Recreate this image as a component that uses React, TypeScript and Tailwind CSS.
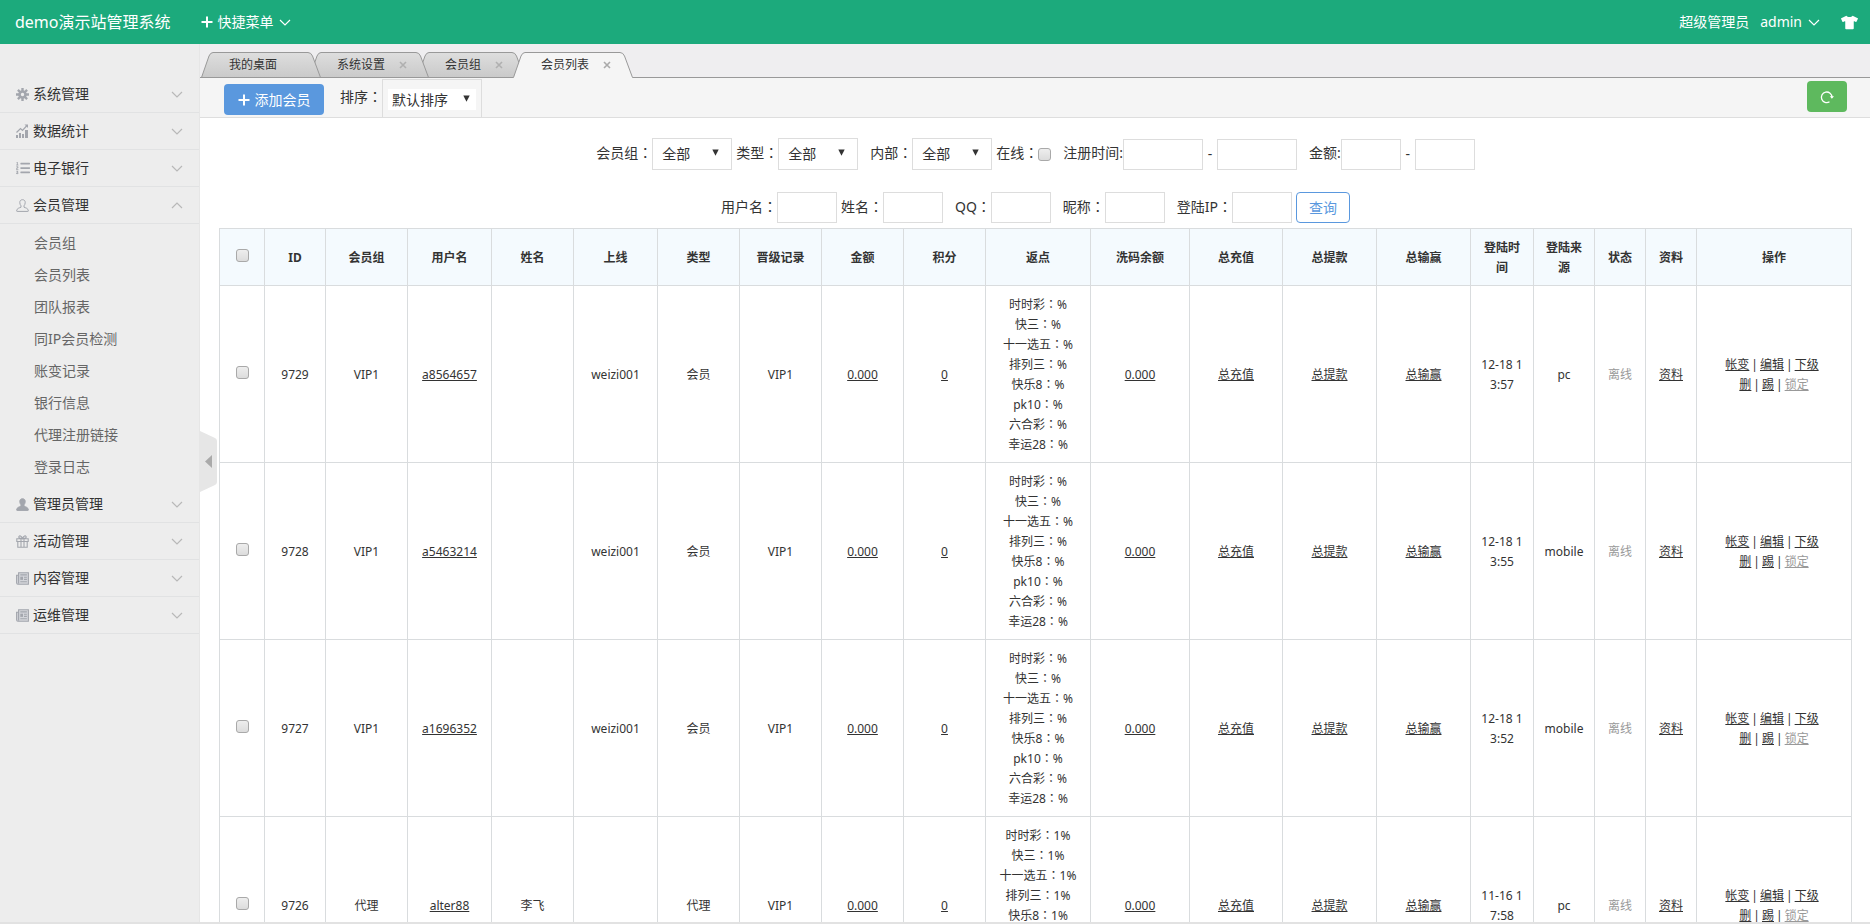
import type { ReactNode } from 'react';

import { FaListOl, FaTshirt } from 'react-icons/fa';

interface MenuItem {
    title: string,
    icon: ReactNode,
    children?: string[]
};

interface TabItem {
    title: string,
    width: number,
    className: string,
    active?: boolean,
    closable?: boolean
};

interface Member {
    id: number,
    group: string,
    username: string,
    realname: string,
    parent: string,
    type: string,
    time: string,
    source: string,
    rebate: string
};

const GearIcon = () => (
    <svg width="13" height="13" viewBox="0 0 13 13" fill="none" stroke="currentColor">
        <circle cx="6.5" cy="6.5" r="3" strokeWidth="2.6" />
        <path d="M6.5 0V3M6.5 10V13M0 6.5H3M10 6.5H13M1.9 1.9L4 4M9 9L11.1 11.1M1.9 11.1L4 9M9 4L11.1 1.9" strokeWidth="2.4" />
    </svg>
);

const ChartIcon = () => (
    <svg width="13" height="14" viewBox="0 0 13 14" fill="currentColor">
        <path d="M0 11h2v3H0zM3 9h2v5H3zM6 10h2v4H6zM9 6h3v8H9z" />
        <path d="M0.5 8.5L4.5 4.5L6.5 6.5L11 1.5" fill="none" stroke="currentColor" strokeWidth="1.2" />
        <path d="M8.5 0.5H12V4z" />
    </svg>
);

const UserIcon = ({ filled = false }: { filled?: boolean }) => (
    <svg width="13" height="13" viewBox="0 0 13 13" fill={filled ? 'currentColor' : 'none'} stroke="currentColor">
        <path d="M6.5 0.7C4.6 0.7 3.7 2 3.8 3.7C3.9 5 4.3 6 5 6.8V8.2C3.5 8.9 0.8 9.2 0.6 11.9C0.6 12.2 0.8 12.4 1.1 12.4H11.9C12.2 12.4 12.4 12.2 12.4 11.9C12.2 9.2 9.5 8.9 8 8.2V6.8C8.7 6 9.1 5 9.2 3.7C9.3 2 8.4 0.7 6.5 0.7Z" />
    </svg>
);

const GiftIcon = () => (
    <svg width="13" height="13" viewBox="0 0 13 13" fill="none" stroke="currentColor" strokeWidth="1.1">
        <path d="M0.8 3.7H12.2V6.5H0.8zM1.8 6.5V12.3H11.2V6.5M5 3.7V12.3M8 3.7V12.3M6.5 3.5C5.5 1 3.2 0 2.8 1.8C2.6 2.8 3.5 3.5 6.5 3.6C9.5 3.5 10.4 2.8 10.2 1.8C9.8 0 7.5 1 6.5 3.5Z" />
    </svg>
);

const NewsIcon = () => (
    <svg width="13" height="13" viewBox="0 0 13 13" fill="none" stroke="currentColor" strokeWidth="1.1">
        <path d="M2.6 0.7H12.4V12.3H2C1.1 12.3 0.6 11.7 0.6 10.8V3.2H2.6V0.7ZM2.6 3V11.5" fill="#d3d5da" />
        <path d="M4.3 2.9H10.9M8 5.2H10.9M8 7.4H10.9M4.3 9.8H10.9" />
        <path d="M4.3 4.7H7V7.9H4.3z" fill="currentColor" stroke="none" />
    </svg>
);

const Chevron = ({ up = false }: { up?: boolean }) => (
    <svg width="12" height="7" viewBox="0 0 12 7" fill="none" stroke="currentColor" strokeWidth="1.2">
        <path d={up ? 'M1 6L6 1L11 6' : 'M1 1L6 6L11 1'} />
    </svg>
);

const PlusIcon = () => (
    <svg width="12" height="12" viewBox="0 0 12 12" fill="none" stroke="currentColor" strokeWidth="2">
        <path d="M6 0.5V11.5M0.5 6H11.5" />
    </svg>
);

// full-width colon, centred in its box
const Colon = () => <span className="font-['Noto_Sans_CJK_TC',sans-serif] leading-none">：</span>;

const menu: MenuItem[] = [
    { title: '系统管理', icon: <GearIcon /> },
    { title: '数据统计', icon: <ChartIcon /> },
    { title: '电子银行', icon: <FaListOl className="size-[14px]" /> },
    {
        title: '会员管理',
        icon: <UserIcon />,
        children: ['会员组', '会员列表', '团队报表', '同IP会员检测', '账变记录', '银行信息', '代理注册链接', '登录日志']
    },
    { title: '管理员管理', icon: <UserIcon filled /> },
    { title: '活动管理', icon: <GiftIcon /> },
    { title: '内容管理', icon: <NewsIcon /> },
    { title: '运维管理', icon: <NewsIcon /> }
];

const tabs: TabItem[] = [
    { title: '我的桌面', width: 120, className: 'w-[120px] z-30' },
    { title: '系统设置', width: 120, className: 'w-[120px] z-20', closable: true },
    { title: '会员组', width: 108, className: 'w-[108px] z-10', closable: true },
    { title: '会员列表', width: 120, className: 'w-[120px] z-40', closable: true, active: true }
];

const columns = [
    { title: 'ID', width: 'w-[61px]' },
    { title: '会员组', width: 'w-[82px]' },
    { title: '用户名', width: 'w-[84px]' },
    { title: '姓名', width: 'w-[82px]' },
    { title: '上线', width: 'w-[84px]' },
    { title: '类型', width: 'w-[82px]' },
    { title: '晋级记录', width: 'w-[82px]' },
    { title: '金额', width: 'w-[82px]' },
    { title: '积分', width: 'w-[82px]' },
    { title: '返点', width: 'w-[105px]' },
    { title: '洗码余额', width: 'w-[99px]' },
    { title: '总充值', width: 'w-[93px]' },
    { title: '总提款', width: 'w-[94px]' },
    { title: '总输赢', width: 'w-[94px]' },
    { title: '登陆时间', width: 'w-[63px]' },
    { title: '登陆来源', width: 'w-[61px]' },
    { title: '状态', width: 'w-[51px]' },
    { title: '资料', width: 'w-[51px]' },
    { title: '操作', width: 'w-[155px]' }
];

const members: Member[] = [
    { id: 9729, group: 'VIP1', username: 'a8564657', realname: '', parent: 'weizi001', type: '会员', time: '12-18 13:57', source: 'pc', rebate: '%' },
    { id: 9728, group: 'VIP1', username: 'a5463214', realname: '', parent: 'weizi001', type: '会员', time: '12-18 13:55', source: 'mobile', rebate: '%' },
    { id: 9727, group: 'VIP1', username: 'a1696352', realname: '', parent: 'weizi001', type: '会员', time: '12-18 13:52', source: 'mobile', rebate: '%' },
    { id: 9726, group: '代理', username: 'alter88', realname: '李飞', parent: '', type: '代理', time: '11-16 17:58', source: 'pc', rebate: '1%' }
];

const games = ['时时彩', '快三', '十一选五', '排列三', '快乐8', 'pk10', '六合彩', '幸运28'];

const checkboxStyle = 'appearance-none size-[13px] shrink-0 rounded-[3px] border border-[#a9a9a9] bg-linear-to-b from-[#eeeeee] to-[#dcdcdc] checked:bg-[#5a98de]';

function Header() {
    return(
        <header className="h-11 shrink-0 flex items-center justify-between pl-[15px] pr-3 bg-[#1caa7c] text-white">
            <div className="flex items-center">
                <a href="#" className="text-base">demo演示站管理系统</a>
                <button className="ml-[30px] flex items-center gap-[5px] text-sm">
                    <PlusIcon />
                    <span>快捷菜单</span>
                    <Chevron />
                </button>
            </div>
            <div className="flex items-center text-sm">
                <span>超级管理员</span>
                <button className="ml-[11px] flex items-center gap-[6px]">
                    <span>admin</span>
                    <Chevron />
                </button>
                <button className="ml-[21px]" aria-label="换肤">
                    <FaTshirt className="size-[17px]" />
                </button>
            </div>
        </header>
    );
};

function Sidebar() {
    return(
        <aside className="w-[200px] shrink-0 pt-8 bg-[#ededed] border-r border-[#e6e6e6] text-sm">
            <ul>
                {menu.map((item) => (
                    <li key={item.title}>
                        <button className="w-full h-[37px] flex items-center pl-4 pr-4 border-b border-[#e1e2e3] text-[#333]">
                            <span className="w-[17px] text-[#a3a6ad]">{item.icon}</span>
                            <span className="flex-1 text-left">{item.title}</span>
                            <span className="text-[#b8b8b8]"><Chevron up={!!item.children} /></span>
                        </button>
                        {
                            item.children &&
                            <ul className="py-[3px]">
                                {item.children.map((child) => (
                                    <li key={child}>
                                        <a href="#" className="block h-8 leading-8 pl-[34px] text-[#666]">{child}</a>
                                    </li>
                                ))}
                            </ul>
                        }
                    </li>
                ))}
            </ul>
        </aside>
    );
};

function Tab({ item }: { item: TabItem }) {
    const w = item.width;
    const outline = `M0.5 25.5L8 4Q9.5 0.5 12 0.5H${w - 13}Q${w - 10} 0.5 ${w - 8.5} 4L${w - 0.5} 25.5`;

    return(
        <li className={`relative h-[26px] -mr-3 -mb-px flex items-center pl-7 ${item.className}`}>
            <svg className="absolute inset-0 -z-10" width={w} height="26" viewBox={`0 0 ${w} 26`}>
                <defs>
                    <linearGradient id="tab-fill" x1="0" y1="0" x2="0" y2="1">
                        <stop offset="0" stopColor="#dedede" />
                        <stop offset="1" stopColor="#c9c9c9" />
                    </linearGradient>
                </defs>
                <path d={`${outline}V26H0.5Z`} fill={item.active ? '#f5f5f5' : 'url(#tab-fill)'} />
                <path d={outline} fill="none" stroke="#999" />
                {!item.active && <path d={`M0 25.5H${w}`} stroke="#999" />}
            </svg>
            <button className="flex-1 text-left">{item.title}</button>
            {
                item.closable &&
                <button className="mr-[22px]" aria-label={`关闭${item.title}`}>
                    <svg width="8" height="8" viewBox="0 0 8 8" stroke={item.active ? '#aaa' : '#b0b0b0'} strokeWidth="1.6">
                        <path d="M1 1L7 7M7 1L1 7" />
                    </svg>
                </button>
            }
        </li>
    );
};

function SelectBox({ id, value, className, arrow }: { id: string, value: string, className: string, arrow: string }) {
    return(
        <span className="relative flex">
            <select id={id} className={`appearance-none bg-white text-sm text-[#333] ${className}`}>
                <option>{value}</option>
            </select>
            <svg className={`absolute pointer-events-none ${arrow}`} width="7" height="7" viewBox="0 0 7 7" fill="#333">
                <path d="M0.3 0.5H6.7L3.5 6.8Z" />
            </svg>
        </span>
    );
};

function Toolbar() {
    return(
        <div className="h-10 flex items-start justify-between pl-6 pr-[23px] bg-[#f5f5f5] border-b border-[#dedede] text-sm">
            <div className="flex h-full">
                <button className="mt-[6px] w-[100px] h-[31px] flex items-center justify-center gap-[5px] rounded bg-[#5a98de] text-white">
                    <PlusIcon />
                    添加会员
                </button>
                <label htmlFor="sort" className="ml-4 mt-[9px]">排序<Colon /></label>
                <div className="mt-px w-[100px] flex items-start border border-b-0 border-[#ddd] pt-[9px] pl-[5px]">
                    <SelectBox id="sort" value="默认排序" className="w-[88px] h-[21px] pl-1" arrow="right-[6px] top-[6px]" />
                </div>
            </div>
            <button className="mt-[3px] w-10 h-[31px] flex items-center justify-center rounded bg-[#5eb95e] text-white" aria-label="刷新">
                <svg width="14" height="14" viewBox="0 0 14 14" fill="none" stroke="currentColor" strokeWidth="1.3">
                    <path d="M9.5 11.8A5.3 5.3 0 1 1 12 7.2" />
                    <path d="M9.8 6.3H14L11.9 8.8Z" fill="currentColor" stroke="none" />
                </svg>
            </button>
        </div>
    );
};

function Filters() {

    const renderSelect = (id: string, label: string) => (
        <div className="flex items-center">
            <label htmlFor={id} className="pb-0.5">{label}<Colon /></label>
            <SelectBox id={id} value="全部" className="w-20 h-8 pl-[9px] border border-[#ddd]" arrow="right-[13px] top-[11px]" />
        </div>
    );

    const renderInput = (id: string, label: string, spaced: boolean) => (
        <div className={spaced ? 'flex items-center ml-2' : 'flex items-center'}>
            <label htmlFor={id} className="pb-0.5">{label}<Colon /></label>
            <input id={id} type="text" className="w-15 h-[31px] px-1 border border-[#ddd]" />
        </div>
    );

    return(
        <form className="text-sm">
            <div className="mt-5 flex items-center justify-center gap-1">
                {renderSelect('group', '会员组')}
                {renderSelect('type', '类型')}
                <span className="w-1" />
                {renderSelect('inner', '内部')}
                <div className="flex items-center">
                    <label htmlFor="online" className="pb-0.5">在线<Colon /></label>
                    <input id="online" type="checkbox" className={checkboxStyle} />
                </div>
                <div className="ml-2 flex items-center">
                    <label htmlFor="from" className="pb-0.5">注册时间:</label>
                    <input id="from" type="text" className="w-20 h-[31px] px-1 border border-[#ddd]" />
                </div>
                <span className="w-[6px] text-center">-</span>
                <input type="text" aria-label="注册时间止" className="w-20 h-[31px] px-1 border border-[#ddd]" />
                <div className="ml-2 flex items-center">
                    <label htmlFor="min" className="pb-0.5">金额:</label>
                    <input id="min" type="text" className="w-15 h-[31px] px-1 border border-[#ddd]" />
                </div>
                <span className="w-[6px] text-center">-</span>
                <input type="text" aria-label="最大金额" className="w-15 h-[31px] px-1 border border-[#ddd]" />
            </div>
            <div className="mt-[22px] flex items-center justify-center gap-1">
                {renderInput('username', '用户名', false)}
                {renderInput('realname', '姓名', false)}
                {renderInput('qq', 'QQ', true)}
                {renderInput('nickname', '昵称', true)}
                {renderInput('ip', '登陆IP', true)}
                <button type="button" className="w-[54px] h-[31px] rounded border border-[#5a98de] text-[#5a98de]">查询</button>
            </div>
        </form>
    );
};

function MemberTable() {

    const cell = 'border border-[#d9dcde] px-2 pt-[9px] pb-[7px] break-all';
    const link = 'underline';

    return(
        <table className="mt-[5px] w-full table-fixed border-collapse text-xs leading-5 text-center">
            <thead className="bg-[#f4fafe]">
                <tr>
                    <th className={`${cell} w-[45px]`}>
                        <input type="checkbox" aria-label="全选" className={checkboxStyle} />
                    </th>
                    {columns.map((col) => (
                        <th key={col.title} className={`${cell} ${col.width} font-bold`}>{col.title}</th>
                    ))}
                </tr>
            </thead>
            <tbody>
                {members.map((m) => (
                    <tr key={m.id}>
                        <td className={cell}>
                            <input type="checkbox" aria-label={m.username} className={checkboxStyle} />
                        </td>
                        <td className={cell}>{m.id}</td>
                        <td className={cell}>{m.group}</td>
                        <td className={cell}><a href="#" className={link}>{m.username}</a></td>
                        <td className={cell}>{m.realname}</td>
                        <td className={cell}>{m.parent}</td>
                        <td className={cell}>{m.type}</td>
                        <td className={cell}>VIP1</td>
                        <td className={cell}><a href="#" className={link}>0.000</a></td>
                        <td className={cell}><a href="#" className={link}>0</a></td>
                        <td className={cell}>
                            {games.map((game) => <p key={game}>{game}<Colon />{m.rebate}</p>)}
                        </td>
                        <td className={cell}><a href="#" className={link}>0.000</a></td>
                        <td className={cell}><a href="#" className={link}>总充值</a></td>
                        <td className={cell}><a href="#" className={link}>总提款</a></td>
                        <td className={cell}><a href="#" className={link}>总输赢</a></td>
                        <td className={cell}>{m.time}</td>
                        <td className={cell}>{m.source}</td>
                        <td className={`${cell} text-[#999]`}>离线</td>
                        <td className={cell}><a href="#" className={link}>资料</a></td>
                        <td className={cell}>
                            <div className="flex justify-center gap-0.5 pr-1">
                                <a href="#" className={link}>帐变</a>|<a href="#" className={link}>编辑</a>|<a href="#" className={link}>下级</a>
                            </div>
                            <div className="flex justify-center gap-0.5">
                                <a href="#" className={link}>删</a>|<a href="#" className={link}>踢</a>|<a href="#" className="underline text-[#999]">锁定</a>
                            </div>
                        </td>
                    </tr>
                ))}
            </tbody>
        </table>
    );
};

export default function App() {
    return(
        <div className="h-screen flex flex-col overflow-hidden bg-white text-[#333] font-['Noto_Sans','Noto_Sans_CJK_SC',sans-serif]">
            <Header />
            <div className="flex-1 min-h-0 flex border-b-2 border-[#e2e2e2]">
                <Sidebar />
                <main className="relative flex-1 min-w-0 overflow-hidden">
                    <nav className="h-[34px] bg-[#efeef0] border-b border-[#999] flex items-end">
                        <ul className="flex pl-px text-xs">
                            {tabs.map((item) => <Tab key={item.title} item={item} />)}
                        </ul>
                    </nav>
                    <Toolbar />
                    <div className="pl-[19px] pr-[18px]">
                        <Filters />
                        <MemberTable />
                    </div>
                    <button className="absolute left-0 top-[387px]" aria-label="收起菜单">
                        <svg width="17" height="61" viewBox="0 0 17 61">
                            <path d="M0 0L15 7Q17 8 17 10V51Q17 53 15 54L0 61Z" fill="#e6e6e6" />
                            <path d="M12 24V37L5 30.5Z" fill="#aaa" />
                        </svg>
                    </button>
                </main>
            </div>
        </div>
    );
};
